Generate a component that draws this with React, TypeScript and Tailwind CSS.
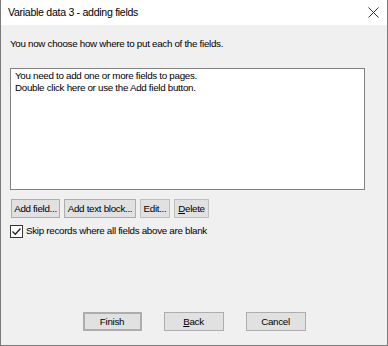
const btn =
  "h-[19px] border border-[#adadad] bg-[#e1e1e1] text-[9.8px] tracking-[-0.3px] leading-none text-black flex items-center justify-center whitespace-nowrap";

export default function App() {
  return (
    <div className="w-[388px] h-[346px] bg-[#f0f0f0] border-x border-b border-[#7a7a7a] flex flex-col font-['Liberation_Sans',sans-serif] text-[9.8px] tracking-[-0.3px] text-black">
      <div className="h-[25px] bg-white flex items-center justify-between pl-[7px] pr-[6px] shrink-0">
        <span className="text-[10.6px]">Variable data 3 - adding fields</span>
        <svg width="11" height="11" viewBox="0 0 11 11" className="mr-[2px]">
          <path d="M0.5 0.5 L10.5 10.5 M10.5 0.5 L0.5 10.5" stroke="#333" strokeWidth="1" />
        </svg>
      </div>
      <div className="flex-1 flex flex-col px-[9px]">
        <p className="mt-[13px] leading-[12px]">You now choose how where to put each of the fields.</p>
        <div className="mt-[18px] w-[355px] h-[122px] bg-white border border-[#828282] px-[4px] py-[1px] leading-[12px]">
          <div>You need to add one or more fields to pages.</div>
          <div>Double click here or use the Add field button.</div>
        </div>
        <div className="mt-[9px] flex gap-[4px] pl-[1px]">
          <div className={btn + " w-[49px]"}>Add field...</div>
          <div className={btn + " w-[72px]"}>Add text block...</div>
          <div className={btn + " w-[30px] text-[#a6a6a6] bg-[#cccccc] border-[#bfbfbf]"}>Edit...</div>
          <div className={btn + " w-[35px] text-[#a6a6a6] bg-[#cccccc] border-[#bfbfbf]"}>
            <span className="underline">D</span>elete
          </div>
        </div>
        <div className="mt-[6px] flex items-center gap-[3px]">
          <div className="w-[13px] h-[13px] border border-[#333] bg-white flex items-center justify-center">
            <svg width="11" height="11" viewBox="0 0 11 11">
              <path d="M1.5 5.5 L4.3 8.3 L9.5 2.5" stroke="#222" strokeWidth="1.3" fill="none" />
            </svg>
          </div>
          <span>Skip records where all fields above are blank</span>
        </div>
        <div className="mt-auto mb-[14px] flex justify-center gap-[22px]">
          <div className={btn + " w-[59px] h-[18px] border-[#0078d7] border-2"}>Finish</div>
          <div className={btn + " w-[60px] h-[18px]"}>
            <span className="underline">B</span>ack
          </div>
          <div className={btn + " w-[60px] h-[18px]"}>Cancel</div>
        </div>
      </div>
    </div>
  );
}
